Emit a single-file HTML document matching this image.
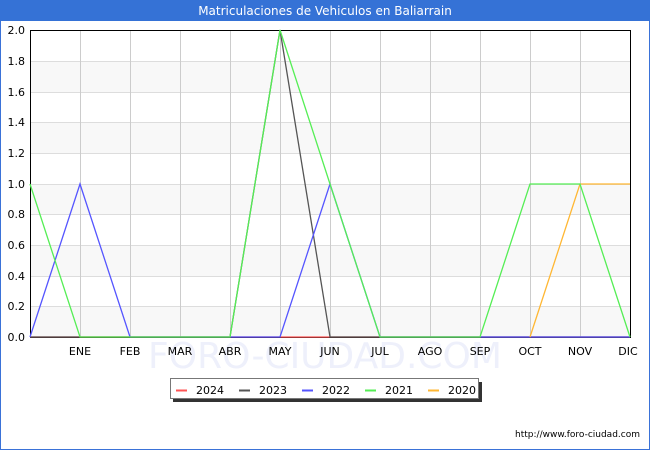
<!DOCTYPE html>
<html><head><meta charset="utf-8"><style>
body{margin:0;width:650px;height:450px;overflow:hidden;background:#fff;font-family:"DejaVu Sans","Liberation Sans",sans-serif;}
</style></head><body>
<svg width="650" height="450" xmlns="http://www.w3.org/2000/svg" font-family="DejaVu Sans, Liberation Sans, sans-serif">
<rect x="0.5" y="0.5" width="649" height="449" fill="#fff" stroke="#3a72d8"/>
<rect x="0" y="0" width="650" height="21" fill="#3572d6"/>
<text x="325" y="15" fill="#fff" font-size="12" text-anchor="middle">Matriculaciones de Vehiculos en Baliarrain</text>
<g fill="#f8f8f8">
<rect x="30" y="61" width="600" height="31"/><rect x="30" y="122" width="600" height="31"/><rect x="30" y="184" width="600" height="31"/><rect x="30" y="245" width="600" height="31"/><rect x="30" y="306" width="600" height="31"/>
</g>
<g stroke="#ddd" stroke-width="1">
<path d="M30 61.5H630M30 92.5H630M30 122.5H630M30 153.5H630M30 184.5H630M30 214.5H630M30 245.5H630M30 276.5H630M30 306.5H630"/>
</g>
<g stroke="#ccc"><path d="M80.5 30V337M130.5 30V337M180.5 30V337M230.5 30V337M280.5 30V337M330.5 30V337M380.5 30V337M430.5 30V337M480.5 30V337M530.5 30V337M580.5 30V337"/></g>
<text x="325" y="368" font-size="36" fill="#eef0fb" text-anchor="middle" font-family="DejaVu Sans">FORO-CIUDAD.COM</text>
<rect x="30.5" y="30.5" width="600" height="307" fill="none" stroke="#000"/>
<g fill="none" stroke-width="1.3">
<path d="M30 337H630" stroke="#ff5555"/>
<path d="M30 337H230L280 30L330 337H630" stroke="#555"/>
<path d="M30 337L80 184L130 337H280L330 184L380 337H630" stroke="#5555ff"/>
<path d="M530 337L580 184H630" stroke="#ffb733"/>
<path d="M30 184L80 337H230L280 30L330 184L380 337H480L530 184H580L630 337" stroke="#55ee55"/>
</g>
<g font-size="11" fill="#000" text-anchor="end">
<text x="25" y="34">2.0</text><text x="25" y="65">1.8</text><text x="25" y="96">1.6</text><text x="25" y="126">1.4</text><text x="25" y="157">1.2</text><text x="25" y="188">1.0</text><text x="25" y="218">0.8</text><text x="25" y="249">0.6</text><text x="25" y="280">0.4</text><text x="25" y="310">0.2</text><text x="25" y="341">0.0</text>
</g>
<g font-size="11" fill="#000" text-anchor="middle">
<text x="80" y="355">ENE</text><text x="130" y="355">FEB</text><text x="180" y="355">MAR</text><text x="230" y="355">ABR</text><text x="280" y="355">MAY</text><text x="330" y="355">JUN</text><text x="380" y="355">JUL</text><text x="430" y="355">AGO</text><text x="480" y="355">SEP</text><text x="530" y="355">OCT</text><text x="580" y="355">NOV</text><text x="628" y="355">DIC</text>
</g>
<rect x="173" y="382" width="309" height="20" fill="#333"/>
<rect x="170.5" y="378.5" width="308" height="20" fill="#fff" stroke="#777"/>
<g stroke-width="2">
<path d="M176 390.5H187" stroke="#ff5555"/><path d="M239 390.5H250" stroke="#555"/><path d="M302 390.5H313" stroke="#5555ff"/><path d="M365 390.5H376" stroke="#55ee55"/><path d="M428 390.5H439" stroke="#ffb733"/>
</g>
<g font-size="11" fill="#000">
<text x="196" y="394">2024</text><text x="259" y="394">2023</text><text x="322" y="394">2022</text><text x="385" y="394">2021</text><text x="448" y="394">2020</text>
</g>
<text x="640" y="437" font-size="9" fill="#000" text-anchor="end">http://www.foro-ciudad.com</text>
</svg>
</body></html>
